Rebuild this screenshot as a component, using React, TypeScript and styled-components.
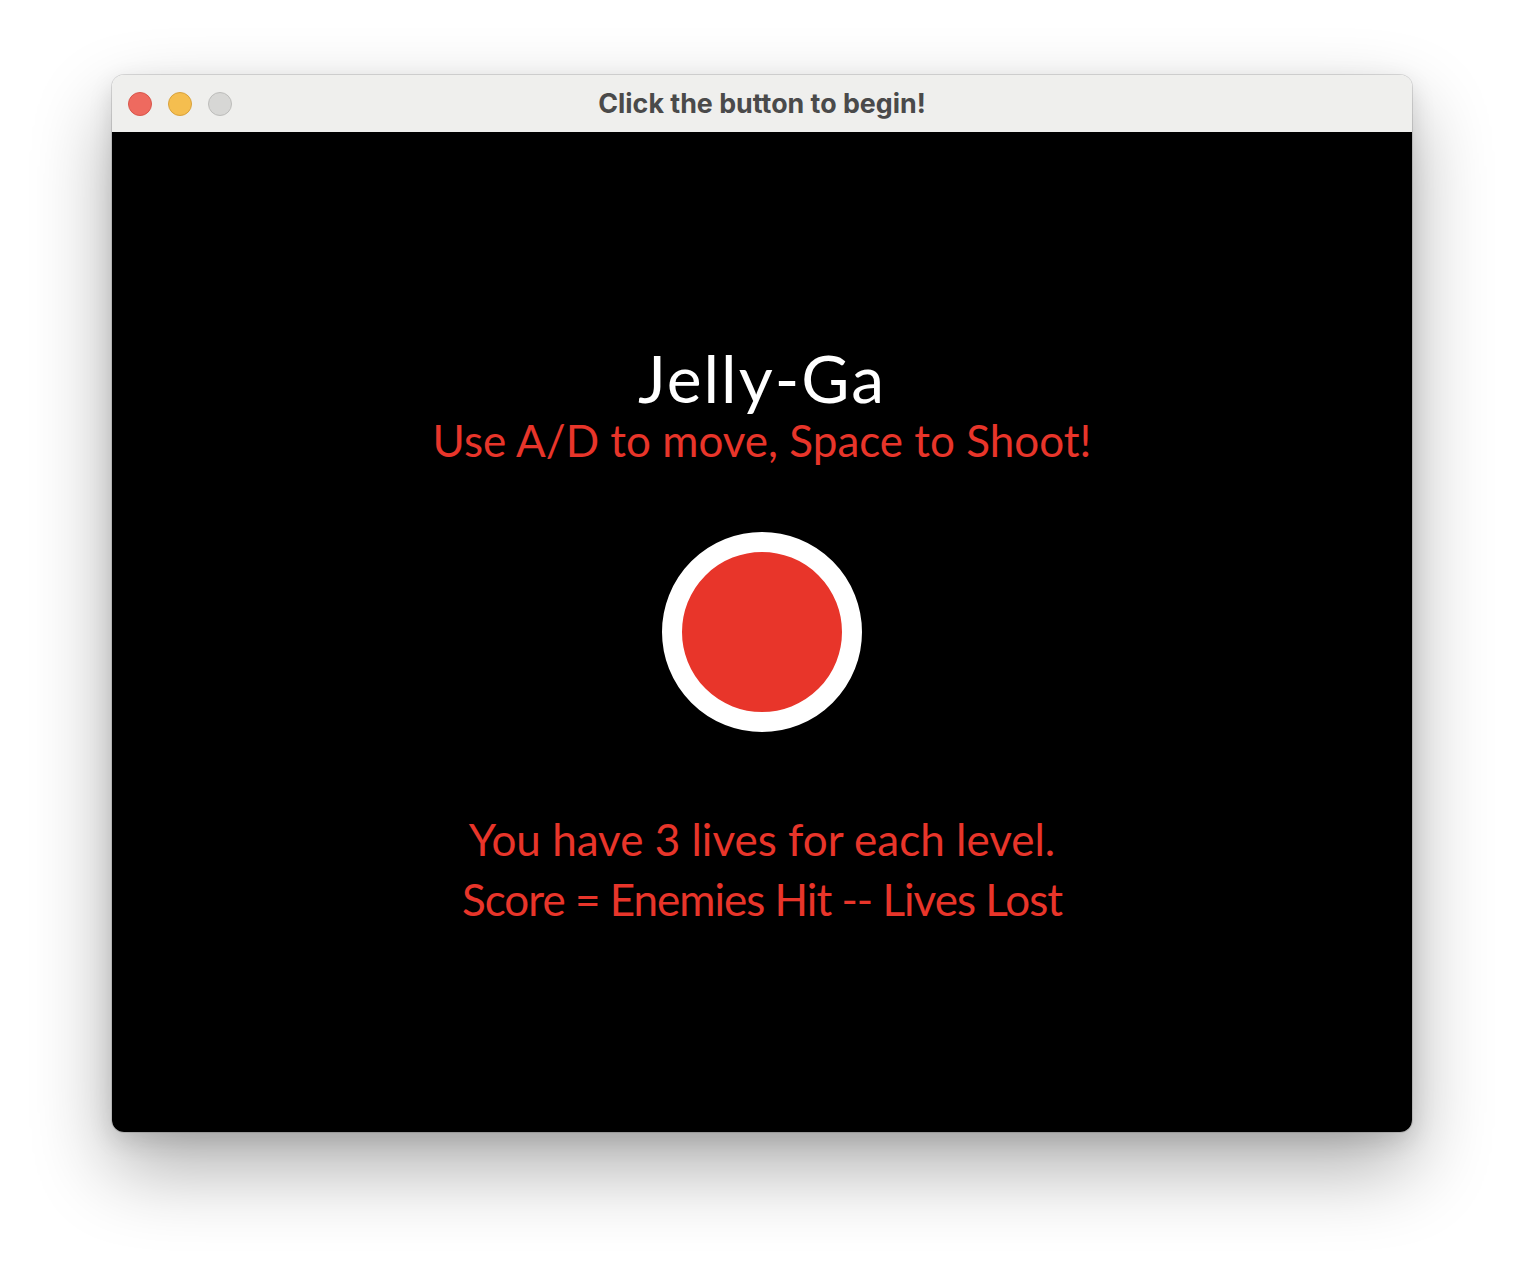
import React from "react";
import styled, { createGlobalStyle } from "styled-components";

const GlobalStyle = createGlobalStyle`
  html, body {
    margin: 0;
    padding: 0;
    background: #ffffff;
  }
`;

const Page = styled.div`
  width: 1524px;
  height: 1280px;
  padding: 75px 112px 0 112px;
  box-sizing: border-box;
  background: #ffffff;
`;

const Window = styled.div`
  width: 1300px;
  height: 1057px;
  border-radius: 12px;
  overflow: hidden;
  display: flex;
  flex-direction: column;
  box-shadow: 0 0 0 1px rgba(0, 0, 0, 0.12), 0 36px 80px rgba(0, 0, 0, 0.32),
    0 8px 24px rgba(0, 0, 0, 0.12);
`;

const TitleBar = styled.div`
  height: 57px;
  flex: none;
  background: #efefed;
  display: grid;
  grid-template-columns: 120px 1fr 120px;
  align-items: center;
`;

const Lights = styled.div`
  display: flex;
  gap: 16px;
  padding-left: 16px;
`;

const Light = styled.span<{ $fill: string; $edge: string }>`
  width: 24px;
  height: 24px;
  border-radius: 50%;
  box-sizing: border-box;
  background: ${(p) => p.$fill};
  border: 1px solid ${(p) => p.$edge};
`;

const WindowTitle = styled.div`
  text-align: center;
  font-family: Inter, "Liberation Sans", sans-serif;
  font-weight: 700;
  font-size: 26.8px;
  color: #4a4a4a;
  padding-bottom: 1px;
`;

const Screen = styled.div`
  flex: 1;
  background: #000000;
  display: flex;
  flex-direction: column;
  align-items: center;
  padding-top: 211px;
  font-family: Lato, "DejaVu Sans", sans-serif;
`;

const GameTitle = styled.div`
  color: #ffffff;
  font-size: 66px;
  line-height: 70px;
  letter-spacing: 2px;
  margin-bottom: -3px;
`;

const Hint = styled.div<{ $spacing: number }>`
  color: #e8352a;
  font-size: 44px;
  line-height: 60px;
  letter-spacing: ${(p) => p.$spacing}px;
`;

const StartButton = styled.button`
  margin: 62px 0 77px 0;
  width: 200px;
  height: 200px;
  border-radius: 50%;
  border: 20px solid #ffffff;
  background: #e8352a;
  padding: 0;
  cursor: pointer;
  box-sizing: border-box;
`;

export default function App() {
  return (
    <>
      <GlobalStyle />
      <Page>
        <Window>
          <TitleBar>
            <Lights>
              <Light $fill="#ee6a5f" $edge="#d9564b" />
              <Light $fill="#f5be4f" $edge="#d9a23c" />
              <Light $fill="#d7d7d5" $edge="#bdbdbb" />
            </Lights>
            <WindowTitle>Click the button to begin!</WindowTitle>
            <div />
          </TitleBar>
          <Screen>
            <GameTitle>Jelly-Ga</GameTitle>
            <Hint $spacing={0}>Use A/D to move, Space to Shoot!</Hint>
            <StartButton aria-label="Start" />
            <Hint $spacing={0}>You have 3 lives for each level.</Hint>
            <Hint $spacing={-1}>Score = Enemies Hit -- Lives Lost</Hint>
          </Screen>
        </Window>
      </Page>
    </>
  );
}
